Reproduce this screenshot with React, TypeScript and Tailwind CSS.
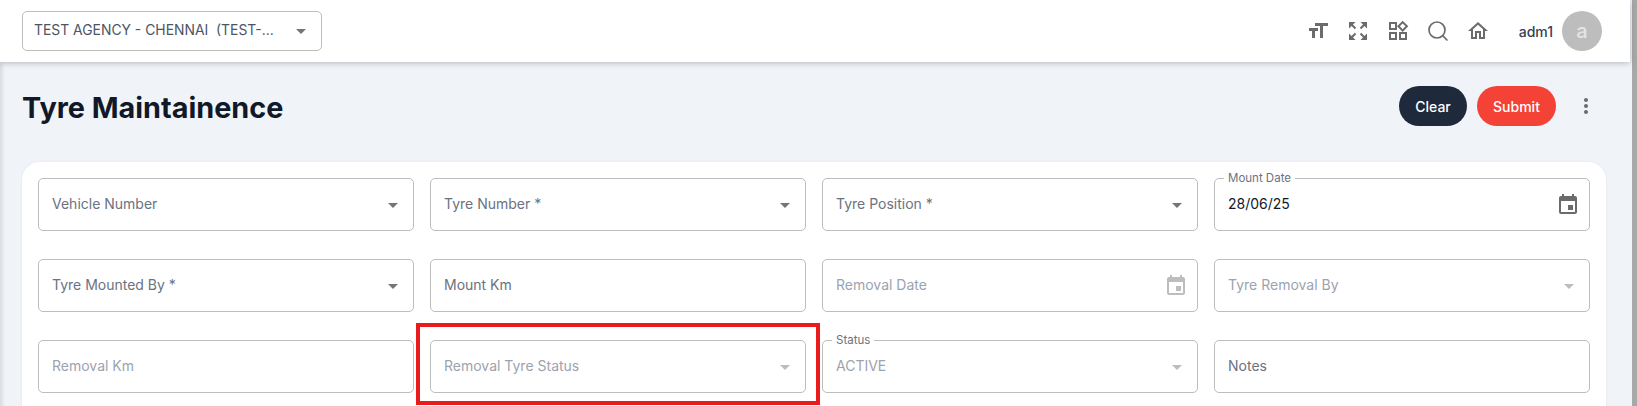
import { MdArrowDropDown, MdEvent, MdFormatSize, MdOutlineHome, MdOutlineWidgets, MdMoreVert } from 'react-icons/md';
import { Search } from 'lucide-react';

interface FieldProps {
  label: string;
  value?: string;
  legend?: string;
  disabled?: boolean;
  icon?: 'select' | 'date';
}

function ExpandIcon() {
  return (
    <svg width="20" height="20" viewBox="0 0 20 20" fill="#6b6b6b" stroke="#6b6b6b">
      <path d="M1 1h6.500L1 7.500z" strokeWidth="0" />
      <path d="M19 1h-6.500L19 7.500z" strokeWidth="0" />
      <path d="M1 19h6.500L1 12.500z" strokeWidth="0" />
      <path d="M19 19h-6.500L19 12.500z" strokeWidth="0" />
      <path d="M3 3l4.500 4.500M17 3l-4.500 4.500M3 17l4.500-4.500M17 17l-4.500-4.500" strokeWidth="2" />
    </svg>
  );
}

function Field({ label, value, legend, disabled, icon }: FieldProps) {
  const labelColor = disabled ? 'text-[#9ca3af]' : 'text-[#6b7280]';

  return (
    <div className="relative h-[53px] rounded-[5px] border border-[#bdbdbd] bg-white flex items-center pl-[13px] pr-[8px]">
      {legend && (
        <span className="absolute -top-[8px] left-[9px] bg-white px-[4px] text-[11.5px] leading-[14px] text-[#6b7280]">
          {legend}
        </span>
      )}
      <span className={`flex-1 pb-[2px] text-[14px] ${value ? (disabled ? 'text-[#9ca3af]' : 'text-[#111827]') : labelColor}`}>
        {value ?? label}
      </span>
      {icon === 'select' && (
        <MdArrowDropDown size={24} className={disabled ? 'text-[#bdbdbd]' : 'text-[#757575]'} />
      )}
      {icon === 'date' && (
        <MdEvent size={24} className={`mr-[1px] ${disabled ? 'text-[#bdbdbd]' : 'text-[#6b6b6b]'}`} />
      )}
    </div>
  );
}

export default function App() {
  return (
    <div className="relative flex h-[406px] overflow-hidden bg-[#f0f4f9] font-['Inter',sans-serif]">
      <div className="flex-1 min-w-0 shadow-[inset_5px_0_4px_-3px_rgba(0,0,0,0.12)]">
        <header className="h-[62px] w-[1630px] bg-white flex items-center justify-between pl-[22px] pr-[28px] shadow-[0_1px_6px_rgba(0,0,0,0.25)] relative">
          <div className="w-[300px] h-[40px] rounded-[5px] border border-[#bdbdbd] flex items-center pl-[11px] pr-[8px]">
            <span className="flex-1 pb-[1px] text-[13.9px] text-[#4b5563] whitespace-pre">TEST AGENCY - CHENNAI  (TEST-...</span>
            <MdArrowDropDown size={24} className="text-[#757575]" />
          </div>
          <div className="flex items-center text-[#6b6b6b]">
            <div className="flex items-center gap-[16px] mr-[29px]">
              <MdFormatSize size={24} />
              <div className="w-[24px] flex justify-center"><ExpandIcon /></div>
              <MdOutlineWidgets size={24} />
              <Search size={24} strokeWidth={1.7} />
              <MdOutlineHome size={24} />
            </div>
            <span className="text-[14px] font-medium text-[#374151] mr-[9px]">adm1</span>
            <div className="w-[40px] h-[40px] rounded-full bg-[#bdbdbd] flex items-center justify-center text-[20px] text-[#e5e5e5] font-medium">
              a
            </div>
          </div>
        </header>

        <div className="pl-[22px] pr-[26px]">
          <div className="h-[100px] pb-[12px] flex items-center justify-between">
            <h1 className="text-[28.8px] font-bold text-[#111827] pt-[3px]">Tyre Maintainence</h1>
            <div className="flex items-center mr-[8px]">
              <button className="w-[68px] h-[40px] rounded-full bg-[#1e293b] text-white text-[14px] font-medium mr-[10px]">Clear</button>
              <button className="w-[79px] h-[40px] rounded-full bg-[#f44336] text-white text-[14px] font-medium mr-[18px]">Submit</button>
              <MdMoreVert size={24} className="text-[#6b6b6b]" />
            </div>
          </div>

          <div className="bg-white rounded-t-[18px] p-[16px] grid grid-cols-4 gap-x-[16px] gap-y-[28px] h-[300px] content-start shadow-[0_0_3px_rgba(0,0,0,0.06)]">
            <Field label="Vehicle Number" icon="select" />
            <Field label="Tyre Number *" icon="select" />
            <Field label="Tyre Position *" icon="select" />
            <Field label="Mount Date" legend="Mount Date" value="28/06/25" icon="date" />
            <Field label="Tyre Mounted By *" icon="select" />
            <Field label="Mount Km" />
            <Field label="Removal Date" icon="date" disabled />
            <Field label="Tyre Removal By" icon="select" disabled />
            <Field label="Removal Km" disabled />
            <Field label="Removal Tyre Status" icon="select" disabled />
            <Field label="Status" legend="Status" value="ACTIVE" icon="select" disabled />
            <Field label="Notes" />
          </div>
        </div>
      </div>
      <div className="w-[5px] bg-[#a8a8a8]" />

      {/* annotation box drawn over the screenshot */}
      <div className="absolute left-[416px] top-[323px] w-[404px] h-[82px] border-4 border-[#e81c1c] pointer-events-none" />
    </div>
  );
}
